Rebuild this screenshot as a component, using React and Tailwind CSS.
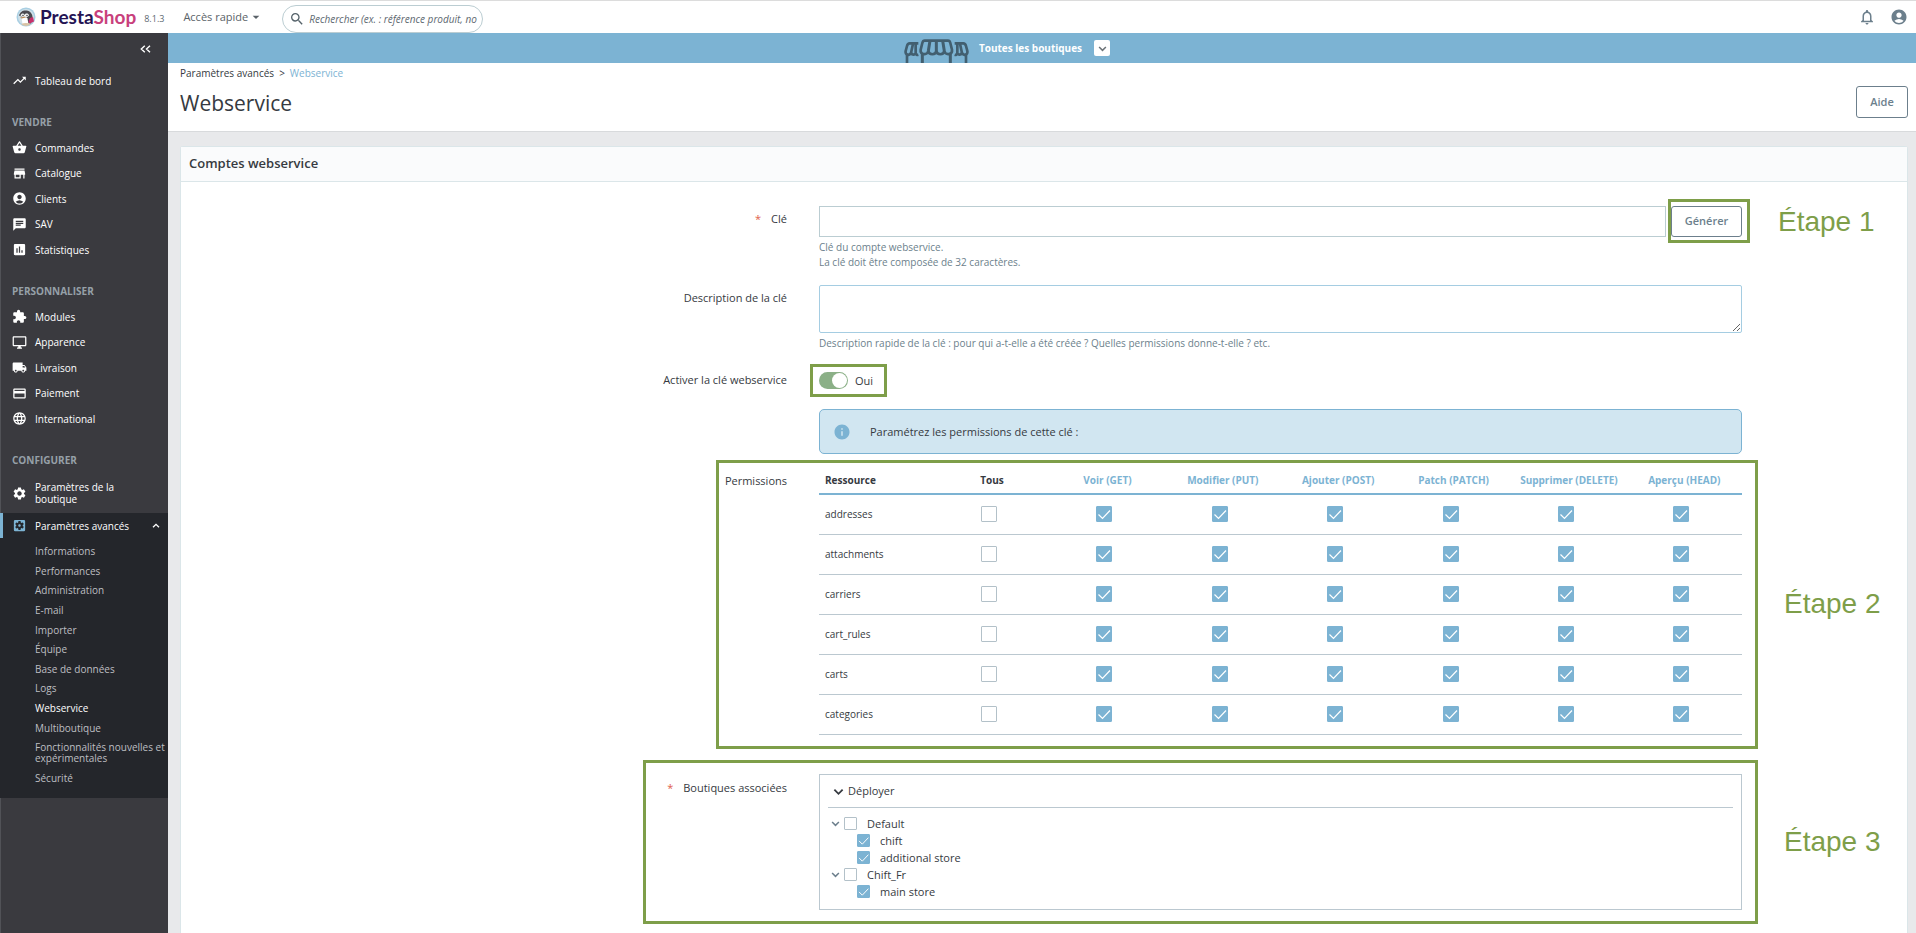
import React from "react";
import {
  MdAccountCircle,
  MdArrowDropDown,
  MdAssessment,
  MdChat,
  MdExtension,
  MdInfo,
  MdLanguage,
  MdLocalShipping,
  MdNotificationsNone,
  MdOutlineDesktopWindows,
  MdPayment,
  MdSearch,
  MdSettings,
  MdSettingsApplications,
  MdShoppingBasket,
  MdStore,
  MdTrendingUp,
} from "react-icons/md";

const menu = [
  {
    title: "VENDRE",
    items: [
      ["Commandes", MdShoppingBasket],
      ["Catalogue", MdStore],
      ["Clients", MdAccountCircle],
      ["SAV", MdChat],
      ["Statistiques", MdAssessment],
    ],
  },
  {
    title: "PERSONNALISER",
    items: [
      ["Modules", MdExtension],
      ["Apparence", MdOutlineDesktopWindows],
      ["Livraison", MdLocalShipping],
      ["Paiement", MdPayment],
      ["International", MdLanguage],
    ],
  },
];

const submenu = [
  "Informations",
  "Performances",
  "Administration",
  "E-mail",
  "Importer",
  "Équipe",
  "Base de données",
  "Logs",
  "Webservice",
  "Multiboutique",
  "Fonctionnalités nouvelles et expérimentales",
  "Sécurité",
];

const methods = [
  "Voir (GET)",
  "Modifier (PUT)",
  "Ajouter (POST)",
  "Patch (PATCH)",
  "Supprimer (DELETE)",
  "Aperçu (HEAD)",
];

const resources = ["addresses", "attachments", "carriers", "cart_rules", "carts", "categories"];

const shopGroups = [
  { name: "Default", shops: ["chift", "additional store"] },
  { name: "Chift_Fr", shops: ["main store"] },
];

function Logo() {
  return (
    <a href="#" className="flex items-center gap-1">
      <svg className="size-5" viewBox="0 0 40 40">
        <circle cx="20" cy="20" r="19" fill="#a9cfe3" />
        <circle cx="20" cy="20" r="16" fill="#cfe0e8" />
        <path d="M6 17C9 8 15 6 21 7c8 1 12 7 12 14l-3 12H15l-2-13z" fill="#4a4a50" />
        <path d="M11 21c4-3 10-2 12 2l2 11H13z" fill="#fff" />
        <path d="M9 17c2-5 6-5 8-1 2-4 8-4 9 1-3 5-13 5-17 0z" fill="#eef1f2" />
        <circle cx="14" cy="17" r="1.500" fill="#3a3a40" />
        <circle cx="22" cy="17" r="1.500" fill="#3a3a40" />
        <path d="M8 21l10-2 2 2-9 2z" fill="#b98d5c" />
        <path d="M28 22l6-2 2 9-9 4-2-4z" fill="#c8306b" />
        <path d="M10 34c6-3 14-3 20 0-6 5-14 5-20 0z" fill="#d9c3a5" />
      </svg>
      <span className="font-['Lato',sans-serif] text-[19px] leading-5 font-bold text-[#251454]">
        Presta<span className="text-[#c8407c]">Shop</span>
      </span>
    </a>
  );
}

function ShopsIcon() {
  const side = (
    <>
      <path d="M43 13H17C12 13 10 17 9 21L5 36C3 48 16 51 21 42L27 14" />
      <path d="M21 42C25 49 34 48 35 42V14M35 42C36 48 40 48 43 47" />
      <path d="M9 48V72" />
    </>
  );
  return (
    <svg className="h-6 w-[65px]" viewBox="0 0 195 72" fill="none" stroke="#425f70" strokeWidth="8">
      {side}
      <g transform="translate(195 0) scale(-1 1)">{side}</g>
      <path d="M62 5H132C136 5 138 8 139 12L144 32C146 48 125 50 121 36C119 49 99 49 97 36C95 49 75 49 73 36C69 50 48 48 50 32L55 12C56 8 58 5 62 5Z" />
      <path d="M78 5L73 36M97 5V36M116 5L121 36M55 44V72M139 44V72" strokeWidth="9" />
    </svg>
  );
}

function Chevron({ className = "", strokeWidth = 2 }) {
  return (
    <svg className={`shrink-0 ${className}`} viewBox="0 0 12 12" fill="none" stroke="currentColor" strokeWidth={strokeWidth}>
      <path d="M1.500 4L6 8.500L10.500 4" />
    </svg>
  );
}

function Checkbox({ label, id, defaultChecked = false, size = "md" }) {
  return (
    <span className={size === "md" ? "inline-grid size-4 align-middle" : "inline-grid size-[13px] shrink-0"}>
      <input
        type="checkbox"
        id={id}
        aria-label={label}
        defaultChecked={defaultChecked}
        className="peer col-start-1 row-start-1 size-full appearance-none rounded-[1px] border border-[#b3c1c9] bg-white checked:border-[#7cb3d3] checked:bg-[#7cb3d3]"
      />
      <svg
        className="pointer-events-none col-start-1 row-start-1 hidden size-full peer-checked:block"
        viewBox="0 0 16 16"
        fill="none"
        stroke="#fff"
        strokeWidth="1.2"
      >
        <path d="M2.5 8.5L6.5 12.5L14 4.5" />
      </svg>
    </span>
  );
}

function MenuItem({ label, icon: Icon }) {
  return (
    <a href="#" className="flex h-[25px] items-center gap-2 pl-3 text-[10px] leading-3 font-medium text-white">
      <Icon className="size-[15px] shrink-0" />
      {label}
    </a>
  );
}

function MenuTitle({ children }) {
  return <h2 className="mt-[22px] mb-[5px] pl-3 text-[10px] leading-[15px] font-bold text-[#96a0a8]">{children}</h2>;
}

function Sidebar() {
  return (
    <nav className="w-[168px] shrink-0 border-l border-[#515257] bg-[#3a3a3f]">
      <div className="-ml-px">
        <div className="flex h-[31px] items-center justify-end pr-[17px]">
          <button aria-label="Réduire le menu">
            <svg className="h-2 w-[11px]" viewBox="0 0 11 8" fill="none" stroke="#fff" strokeWidth="1.4">
              <path d="M4.800.8L1.300 4L4.800 7.200M10 .8L6.500 4L10 7.200" />
            </svg>
          </button>
        </div>
        <div className="mt-1">
          <MenuItem label="Tableau de bord" icon={MdTrendingUp} />
        </div>
        {menu.map((section) => (
          <div key={section.title}>
            <MenuTitle>{section.title}</MenuTitle>
            <ul className="flex h-[127px] flex-col justify-between">
              {section.items.map(([label, icon]) => (
                <li key={label}>
                  <MenuItem label={label} icon={icon} />
                </li>
              ))}
            </ul>
          </div>
        ))}
        <MenuTitle>CONFIGURER</MenuTitle>
        <a href="#" className="flex h-10 items-center gap-2 pr-12 pl-3 text-[10px] leading-3 font-medium text-white">
          <MdSettings className="size-[15px] shrink-0" />
          Paramètres de la boutique
        </a>
        <div className="bg-[#24262b] pb-3.5">
          <a
            href="#"
            className="flex h-[25px] items-center gap-2 border-l-3 border-[#7cb3d3] pr-2 pl-[9px] text-[10px] leading-3 font-medium text-white"
          >
            <MdSettingsApplications className="size-[15px] shrink-0 text-[#7cb3d3]" />
            <span className="flex-1">Paramètres avancés</span>
            <Chevron className="size-2 rotate-180" />
          </a>
          <ul className="mt-2 flex h-[238px] flex-col justify-between pl-[35px] text-[10px] leading-[11px] text-[#bebfc2]">
            {submenu.map((label) => (
              <li key={label}>
                <a href="#" className={label === "Webservice" ? "block font-medium text-white" : "block"}>
                  {label}
                </a>
              </li>
            ))}
          </ul>
        </div>
      </div>
    </nav>
  );
}

function FormRow({ label, htmlFor, required, step, stepClass = "", labelClass = "pt-[5px]", className = "", children }) {
  return (
    <div className={`grid grid-cols-[638fr_923fr_165fr] ${className}`}>
      <div className={`flex justify-end gap-2.5 pr-8 text-[11px] leading-[15px] ${labelClass}`}>
        {required && <span className="text-[#e0604c]">*</span>}
        {label && <label htmlFor={htmlFor}>{label}</label>}
      </div>
      <div className="relative min-w-0">{children}</div>
      {step && (
        <div
          className={`flex min-w-0 items-center font-['Liberation_Sans',sans-serif] text-[28px] leading-8 whitespace-nowrap text-[#7e9e49] ${stepClass}`}
        >
          {step}
        </div>
      )}
    </div>
  );
}

function Highlight({ className }) {
  return <div className={`pointer-events-none absolute border-3 border-[#7e9e49] ${className}`} />;
}

function PermissionsTable() {
  return (
    <table className="w-full table-fixed border-collapse text-[10px] leading-[15px]">
      <thead>
        <tr className="h-[27px] border-b-2 border-[#7cb3d3]">
          <th className="pl-1.5 text-left font-bold">Ressource</th>
          <th className="text-center font-bold">Tous</th>
          {methods.map((method) => (
            <th key={method} className="text-center font-bold whitespace-nowrap text-[#7cb3d3]">
              {method}
            </th>
          ))}
        </tr>
      </thead>
      <tbody>
        {resources.map((resource) => (
          <tr key={resource} className="h-10 border-b border-[#bbc8d0]">
            <td className="pl-1.5">{resource}</td>
            <td className="pr-1.5 text-center">
              <Checkbox label={`${resource} Tous`} />
            </td>
            {methods.map((method) => (
              <td key={method} className="pr-1.5 text-center">
                <Checkbox label={`${resource} ${method}`} defaultChecked />
              </td>
            ))}
          </tr>
        ))}
      </tbody>
    </table>
  );
}

function ShopTree() {
  return (
    <div className="border border-[#bbc8d0] px-2 pb-2">
      <div className="flex h-[33px] items-center border-b border-[#bbc8d0] pl-[5px]">
        <button className="flex items-center gap-1 text-[11px] leading-[15px]">
          <Chevron className="mt-0.5 size-[11px]" />
          Déployer
        </button>
      </div>
      <ul className="pt-[7px] pb-px text-[11px] leading-[17px]">
        {shopGroups.map((group) => (
          <li key={group.name}>
            <div className="flex items-center pl-[3px]">
              <Chevron className="mr-1 size-[9px] text-[#6c7f8c]" />
              <Checkbox id={group.name} label={group.name} size="sm" />
              <label htmlFor={group.name} className="pl-2.5">
                {group.name}
              </label>
            </div>
            <ul>
              {group.shops.map((shop) => (
                <li key={shop} className="flex items-center pl-[29px]">
                  <Checkbox id={shop} label={shop} size="sm" defaultChecked />
                  <label htmlFor={shop} className="pl-2.5">
                    {shop}
                  </label>
                </li>
              ))}
            </ul>
          </li>
        ))}
      </ul>
    </div>
  );
}

export default function App() {
  return (
    <div className="flex min-h-screen flex-col bg-[#e8e9eb] font-['Open_Sans',sans-serif] text-[#363a41]">
      <header className="flex h-[33px] items-center border-t border-[#dcdcdc] bg-white pr-2 pl-4">
        <Logo />
        <span className="pt-1 pl-2 text-[9px] leading-3 text-[#5d6870]">8.1.3</span>
        <button className="ml-[19px] flex items-center text-[11px] leading-4 text-[#5a6268]">
          Accès rapide
          <MdArrowDropDown className="size-4" />
        </button>
        <form className="mt-1 ml-[18px] flex h-7 w-[201px] items-center gap-1 rounded-full border border-[#bbcdd2] pr-0.5 pl-1.5">
          <MdSearch className="size-4 shrink-0 text-[#55626a]" />
          <input
            type="text"
            aria-label="Rechercher"
            placeholder="Rechercher (ex. : référence produit, no"
            className="w-full min-w-0 text-[10px] leading-4 italic placeholder:text-[#5d6870]"
          />
        </form>
        <div className="ml-auto flex items-center gap-3.5 text-[#6c7f8c]">
          <button aria-label="Notifications">
            <MdNotificationsNone className="size-[18px]" />
          </button>
          <button aria-label="Compte">
            <MdAccountCircle className="size-[18px]" />
          </button>
        </div>
      </header>

      <div className="flex flex-1">
        <Sidebar />
        <main className="flex min-w-0 flex-1 flex-col">
          <div className="flex h-[30px] items-center justify-center bg-[#7cb3d3] pr-[70px]">
            <div className="self-end">
              <ShopsIcon />
            </div>
            <span className="pr-3 pl-2.5 text-[10px] leading-4 font-bold text-white">Toutes les boutiques</span>
            <button aria-label="Choisir une boutique" className="flex size-4 items-center justify-center rounded-[2px] bg-white text-[#6c7378]">
              <Chevron className="size-[9px]" />
            </button>
          </div>

          <div className="flex items-start justify-between border-b border-[#d8dadc] bg-white pr-2 pb-[13px] pl-3">
            <div>
              <div className="flex gap-[5px] pt-[3px] text-[10px] leading-[15px]">
                <a href="#">Paramètres avancés</a>
                <span>&gt;</span>
                <a href="#" className="font-medium text-[#7cb3d3]">
                  Webservice
                </a>
              </div>
              <h1 className="pt-[7px] text-[21px] leading-[30px]">Webservice</h1>
            </div>
            <button className="mt-[23px] h-8 w-[52px] rounded-[3px] border border-[#6c7f8c] text-[11px] leading-4 font-semibold text-[#6c7f8c]">
              Aide
            </button>
          </div>

          <section className="mt-3.5 mr-2 ml-3 flex-1 rounded-t-[3px] border border-b-0 border-[#dbe6e9] bg-white">
            <h2 className="h-[35px] border-b border-[#dbe6e9] bg-[#fafbfc] px-2 text-[13px] leading-[33px] font-semibold">
              Comptes webservice
            </h2>

            <div className="pt-6 pb-[25px]">
              <FormRow label="Clé" htmlFor="key" required step="Étape 1" stepClass="h-[31px] pl-9">
                <div className="relative flex gap-[5px]">
                  <input id="key" type="text" className="h-[31px] min-w-0 flex-1 border border-[#bbcdd2] px-2 text-[11px]" />
                  <button className="h-[31px] w-[71px] rounded-[3px] border border-[#6c7f8c] text-[11px] font-semibold text-[#6c7f8c]">
                    Générer
                  </button>
                  <Highlight className="-top-[7px] -right-2 -bottom-1.5 w-[82px]" />
                </div>
                <p className="pt-[3px] text-[10px] leading-[15px] text-[#6c7f8c]">
                  Clé du compte webservice.
                  <br />
                  La clé doit être composée de 32 caractères.
                </p>
              </FormRow>

              <FormRow label="Description de la clé" htmlFor="description" className="pt-[15px]">
                <textarea id="description" className="block h-12 w-full rounded-[2px] border border-[#a5cde2] px-2 text-[11px]" />
                <p className="pt-[3px] text-[10px] leading-[15px] text-[#6c7f8c]">
                  Description rapide de la clé : pour qui a-t-elle a été créée ? Quelles permissions donne-t-elle ? etc.
                </p>
              </FormRow>

              <FormRow label="Activer la clé webservice" htmlFor="active" className="pt-[21px]" labelClass="">
                <div className="relative flex w-fit items-center gap-[7px] pr-2.5">
                  <span className="inline-grid h-[17px] w-[29px]">
                    <input
                      id="active"
                      type="checkbox"
                      role="switch"
                      defaultChecked
                      className="col-start-1 row-start-1 size-full appearance-none rounded-full bg-[#8bb087]"
                    />
                    <span className="pointer-events-none col-start-1 row-start-1 mr-px size-[15px] self-center justify-self-end rounded-full bg-white" />
                  </span>
                  <span className="text-[11px] leading-[15px]">Oui</span>
                  <Highlight className="-inset-y-2 -right-1 -left-[9px]" />
                </div>
              </FormRow>

              <FormRow className="pt-5">
                <div className="flex h-[45px] items-center gap-[19px] rounded-[5px] border border-[#7cb3d3] bg-[#d1e6f1] pl-[13px] text-[11px] leading-[15px]">
                  <MdInfo className="size-[18px] text-[#7cb3d3]" />
                  Paramétrez les permissions de cette clé :
                </div>
              </FormRow>

              <FormRow label="Permissions" className="pt-[13px]" labelClass="pt-1.5" step="Étape 2" stepClass="pt-1.5 pl-[42px]">
                <PermissionsTable />
                <Highlight className="-top-[7px] -right-4 -bottom-3.5 -left-[103px]" />
              </FormRow>

              <FormRow
                label="Boutiques associées"
                required
                className="pt-[39px]"
                labelClass="pt-1.5"
                step="Étape 3"
                stepClass="pl-[42px]"
              >
                <ShopTree />
                <Highlight className="-inset-y-3.5 -right-4 -left-[176px]" />
              </FormRow>
            </div>
          </section>
        </main>
      </div>
    </div>
  );
}
